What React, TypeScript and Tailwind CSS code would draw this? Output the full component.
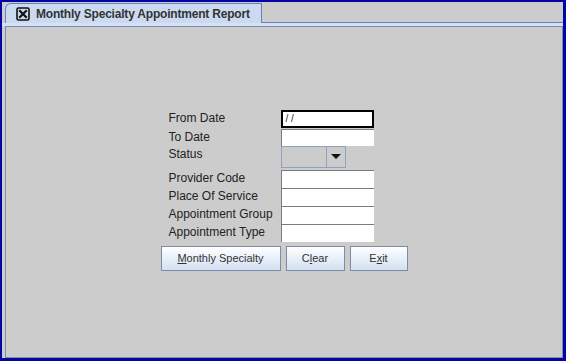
const fields = ["Provider Code", "Place Of Service", "Appointment Group", "Appointment Type"];

const Label = ({ text }: { text: string }) => (
  <div className="w-[120px] pl-[8px] pt-[1px] text-[12px] leading-[15px] text-[#222]">{text}</div>
);

const TextBox = () => (
  <div className="w-[93px] h-[18px] bg-white border-t border-l border-[#7c7c7c]" />
);

const CloseIcon = () => (
  <svg width="14" height="14" viewBox="0 0 14 14">
    <rect x="1" y="1" width="12" height="12" rx="1.5" fill="none" stroke="#111" strokeWidth="1.6" />
    <path d="M4 4 L10 10 M10 4 L4 10" stroke="#111" strokeWidth="2.2" strokeLinecap="square" />
  </svg>
);

const Button = ({ w, children }: { w: string; children: React.ReactNode }) => (
  <button
    className={`${w} h-[25px] border border-[#7b8ca8] bg-gradient-to-b from-white to-[#d3e0f2] text-[11px] text-[#333] flex items-center justify-center`}
  >
    {children}
  </button>
);

export default function App() {
  return (
    <div
      className="w-[566px] h-[361px] bg-[#0505a3] pt-[2px] pl-[2px] pr-[3px] pb-[3px]"
      style={{ fontFamily: '"Liberation Sans", Arial, sans-serif' }}
    >
      <div className="w-full h-full bg-[#cccccc] flex flex-col">
        <div className="h-[21px] flex items-end pl-[3px]">
          <div className="w-[257px] h-[20px] bg-[#cbdaf1] border-l border-t border-r border-[#6382bf] rounded-tl-[6px] flex items-center pl-[10px] gap-[6px]">
            <CloseIcon />
            <span className="text-[12px] font-bold text-[#333] tracking-[-0.2px]">
              Monthly Specialty Appointment Report
            </span>
          </div>
          <div className="flex-1 h-[2px] border-b border-[#6382bf]" />
        </div>
        <div className="h-[3px] bg-[#d6e1f3]" />
        <div className="flex-1 ml-[3px] border border-[#7d8fb0] flex justify-center pt-[83px]">
          <div className="w-[247px] flex flex-col">
            <div className="h-[18px] flex items-start">
              <Label text="From Date" />
              <div className="w-[93px] h-[18px] bg-white border-2 border-black text-[10px] leading-[14px] pl-[3px] text-[#222]">
                / /
              </div>
            </div>
            <div className="h-[17px] mt-[1px] flex items-start">
              <Label text="To Date" />
              <div className="w-[93px] h-[17px] bg-white border-t border-l border-[#7c7c7c]" />
            </div>
            <div className="h-[22px] flex items-start">
              <Label text="Status" />
              <div className="w-[65px] h-[22px] border border-[#8ea2c2] flex">
                <div className="flex-1 border-r border-[#8ea2c2]" />
                <div className="w-[18px] flex items-center justify-center">
                  <svg width="10" height="6" viewBox="0 0 10 6">
                    <path d="M0 0 L10 0 L5 5 Z" fill="#111" />
                  </svg>
                </div>
              </div>
            </div>
            <div className="mt-[2px] flex flex-col">
              {fields.map((f) => (
                <div key={f} className="h-[18px] flex items-start">
                  <Label text={f} />
                  <TextBox />
                </div>
              ))}
            </div>
            <div className="mt-[4px] flex gap-[5px]">
              <Button w="w-[120px]">
                <span>
                  <span className="underline">M</span>onthly Specialty
                </span>
              </Button>
              <Button w="w-[59px]">
                <span>
                  C<span className="underline">l</span>ear
                </span>
              </Button>
              <Button w="w-[58px]">
                <span>
                  E<span className="underline">x</span>it
                </span>
              </Button>
            </div>
          </div>
        </div>
      </div>
    </div>
  );
}
